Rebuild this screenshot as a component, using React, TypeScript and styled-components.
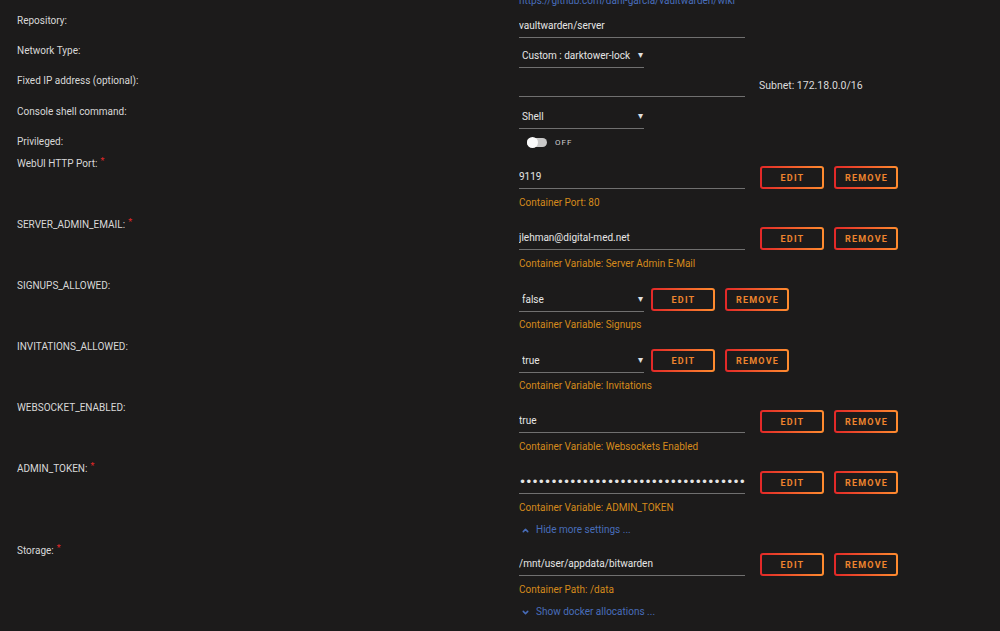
import styled, { createGlobalStyle } from "styled-components";
import { ChevronDown, ChevronUp, Plus } from "lucide-react";

const GlobalStyle = createGlobalStyle`
  html, body {
    margin: 0;
    padding: 0;
    background: #1c1b1b;
  }
  body {
    font-family: Roboto, "Liberation Sans", sans-serif;
    color: #d6d6d6;
    overflow: hidden;
  }
`;

const Page = styled.div`
  width: 1000px;
  height: 631px;
  overflow: hidden;
  background: #1c1b1b;
`;

const Form = styled.div`
  margin-top: -6px;
`;

const Row = styled.div<{ $h?: number; $pb?: number }>`
  display: grid;
  grid-template-columns: 519px 1fr;
  height: ${(p) => (p.$h ? `${p.$h}px` : "auto")};
  padding-bottom: ${(p) => p.$pb ?? 0}px;
`;

const Label = styled.div`
  padding-left: 17px;
  font-size: 10px;
  line-height: 14px;
  color: #d8d8d8;
`;

const Required = styled.span`
  color: #e22828;
  margin-left: 3px;
  font-size: 9px;
  position: relative;
  top: -3px;
`;

const Link = styled.a`
  display: flex;
  align-items: center;
  height: 14px;
  gap: 6px;
  font-size: 10px;
  line-height: 14px;
  color: #486dba;
  text-decoration: none;
  white-space: nowrap;
  svg {
    margin-left: 2px;
    flex: none;
  }
`;

const Content = styled.div<{ $pt?: number }>`
  padding-top: ${(p) => p.$pt ?? 0}px;
`;

const Controls = styled.div`
  display: flex;
  align-items: center;
  height: 23px;
  gap: 10px;
`;

const TextField = styled.input<{ $kind?: "text" | "password" }>`
  width: 226px;
  height: 23px;
  box-sizing: border-box;
  margin: 0 5px 0 0;
  padding: 0 0 1px 0;
  background: transparent;
  border: 0;
  border-bottom: 1px solid #707070;
  outline: none;
  color: #e6e6e6;
  font-family: ${(p) =>
    p.$kind === "password"
      ? `"DejaVu Sans", sans-serif`
      : `Roboto, "Liberation Sans", sans-serif`};
  font-size: ${(p) => (p.$kind === "password" ? "12px" : "10px")};
  letter-spacing: ${(p) => (p.$kind === "password" ? "-0.8px" : "0")};
`;

const SelectWrap = styled.div`
  position: relative;
  width: 125px;
  margin-right: -3px;
  &::after {
    content: "▾";
    position: absolute;
    right: 1px;
    top: 5px;
    font-size: 10px;
    color: #e0e0e0;
    pointer-events: none;
  }
`;

const Select = styled.select`
  appearance: none;
  width: 100%;
  height: 23px;
  box-sizing: border-box;
  margin: 0;
  padding: 0 0 1px 3px;
  background: transparent;
  border: 0;
  border-bottom: 1px solid #707070;
  border-radius: 0;
  outline: none;
  color: #e6e6e6;
  font-family: Roboto, "Liberation Sans", sans-serif;
  font-size: 10px;
`;

const Button = styled.button`
  width: 64px;
  height: 23px;
  box-sizing: border-box;
  padding: 0 0 0 1px;
  border: 2px solid transparent;
  border-radius: 3px;
  background: linear-gradient(#1c1b1b, #1c1b1b) padding-box,
    linear-gradient(90deg, #e22828, #ff8c2f) border-box;
  color: #ee842e;
  font-family: Roboto, "Liberation Sans", sans-serif;
  font-weight: 700;
  font-size: 9px;
  letter-spacing: 1.2px;
  text-transform: uppercase;
  cursor: pointer;
`;

const Desc = styled.div`
  margin-top: 7px;
  font-size: 10px;
  line-height: 14px;
  color: #d58a1c;
`;

const Subnet = styled.span`
  margin-left: -1px;
  font-size: 10.5px;
  color: #dcdcdc;
`;

const ToggleLine = styled.div`
  display: flex;
  align-items: center;
  height: 14px;
  padding-left: 8px;
  gap: 8px;
`;

const Toggle = styled.div`
  position: relative;
  width: 20px;
  height: 9px;
  border-radius: 5px;
  background: #c8c8c8;
`;

const Knob = styled.span`
  position: absolute;
  left: 0;
  top: -1px;
  width: 11px;
  height: 11px;
  border-radius: 50%;
  background: #fafafa;
`;

const ToggleText = styled.span`
  font-size: 8px;
  letter-spacing: 1px;
  color: #cfcfcf;
`;

type Entry = {
  label: string;
  required?: boolean;
  kind: "text" | "select" | "password";
  value: string;
  desc: string;
};

const entries: Entry[] = [
  { label: "WebUI HTTP Port:", required: true, kind: "text", value: "9119", desc: "Container Port: 80" },
  { label: "SERVER_ADMIN_EMAIL:", required: true, kind: "text", value: "jlehman@digital-med.net", desc: "Container Variable: Server Admin E-Mail" },
  { label: "SIGNUPS_ALLOWED:", kind: "select", value: "false", desc: "Container Variable: Signups" },
  { label: "INVITATIONS_ALLOWED:", kind: "select", value: "true", desc: "Container Variable: Invitations" },
  { label: "WEBSOCKET_ENABLED:", kind: "text", value: "true", desc: "Container Variable: Websockets Enabled" },
  { label: "ADMIN_TOKEN:", required: true, kind: "password", value: "x".repeat(48), desc: "Container Variable: ADMIN_TOKEN" },
];

const storage: Entry = {
  label: "Storage:",
  required: true,
  kind: "text",
  value: "/mnt/user/appdata/bitwarden",
  desc: "Container Path: /data",
};

function ConfigRow({ entry }: { entry: Entry }) {
  return (
    <Row $pb={8}>
      <Label>
        {entry.label}
        {entry.required && <Required>*</Required>}
      </Label>
      <Content $pt={9}>
        <Controls>
          {entry.kind === "select" ? (
            <SelectWrap>
              <Select defaultValue={entry.value}>
                <option value="false">false</option>
                <option value="true">true</option>
              </Select>
            </SelectWrap>
          ) : (
            <TextField
              type={entry.kind === "password" ? "password" : "text"}
              $kind={entry.kind === "password" ? "password" : "text"}
              defaultValue={entry.value}
              readOnly
            />
          )}
          <Button>Edit</Button>
          <Button>Remove</Button>
        </Controls>
        <Desc>{entry.desc}</Desc>
      </Content>
    </Row>
  );
}

export default function App() {
  return (
    <Page>
      <GlobalStyle />
      <Form>
        <Row $h={20}>
          <Label />
          <Content>
            <Link href="#">https://github.com/dani-garcia/vaultwarden/wiki</Link>
          </Content>
        </Row>
        <Row $h={30}>
          <Label>Repository:</Label>
          <Content>
            <TextField defaultValue="vaultwarden/server" readOnly />
          </Content>
        </Row>
        <Row $h={30}>
          <Label>Network Type:</Label>
          <Content>
            <SelectWrap>
              <Select defaultValue="lock">
                <option value="lock">Custom : darktower-lock</option>
              </Select>
            </SelectWrap>
          </Content>
        </Row>
        <Row $h={31}>
          <Label>Fixed IP address (optional):</Label>
          <Content>
            <Controls>
              <TextField defaultValue="" readOnly />
              <Subnet>Subnet: 172.18.0.0/16</Subnet>
            </Controls>
          </Content>
        </Row>
        <Row $h={30}>
          <Label>Console shell command:</Label>
          <Content>
            <SelectWrap>
              <Select defaultValue="shell">
                <option value="shell">Shell</option>
              </Select>
            </SelectWrap>
          </Content>
        </Row>
        <Row $h={22}>
          <Label>Privileged:</Label>
          <Content>
            <ToggleLine>
              <Toggle>
                <Knob />
              </Toggle>
              <ToggleText>OFF</ToggleText>
            </ToggleLine>
          </Content>
        </Row>
        {entries.map((e) => (
          <ConfigRow key={e.label} entry={e} />
        ))}
        <Row $pb={7}>
          <Label />
          <Content>
            <Link href="#">
              <ChevronUp size={9} strokeWidth={4} />
              Hide more settings ...
            </Link>
          </Content>
        </Row>
        <ConfigRow entry={storage} />
        <Row $pb={10}>
          <Label />
          <Content>
            <Link href="#">
              <ChevronDown size={9} strokeWidth={4} />
              Show docker allocations ...
            </Link>
          </Content>
        </Row>
        <Row>
          <Label />
          <Content>
            <Link href="#">
              <Plus size={9} strokeWidth={4} />
              Add another Path, Port, Variable, Label or Device
            </Link>
          </Content>
        </Row>
      </Form>
    </Page>
  );
}
